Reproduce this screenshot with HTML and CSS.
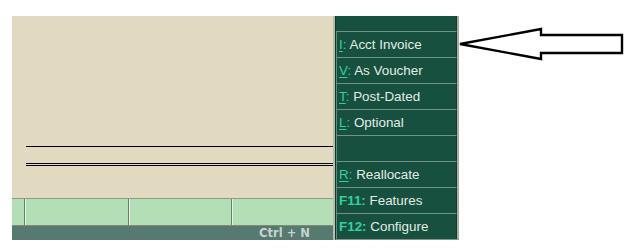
FILE: index.html
```html
<!DOCTYPE html>
<html>
<head>
<meta charset="utf-8">
<link rel="stylesheet" href="styles.css">
</head>
<body>
<div class="screen">
  <div class="main">
    <div class="canvas">
      <div class="rule"></div>
      <div class="double"></div>
    </div>
    <div class="tabs">
      <div class="cell first"></div>
      <div class="cell"></div>
      <div class="cell"></div>
      <div class="cell"></div>
    </div>
    <div class="status">
      <span class="hint">Ctrl + N</span>
    </div>
  </div>
  <div class="gap"></div>
  <div class="side">
    <div class="side-top"></div>
    <div class="btn"><span class="key"><u>I</u>:</span> Acct Invoice</div>
    <div class="btn"><span class="key"><u>V</u>:</span> As Voucher</div>
    <div class="btn"><span class="key"><u>T</u>:</span> Post-Dated</div>
    <div class="btn"><span class="key"><u>L</u>:</span> Optional</div>
    <div class="btn"></div>
    <div class="btn"><span class="key"><u>R</u>:</span> Reallocate</div>
    <div class="btn"><span class="key bold">F11:</span> Features</div>
    <div class="btn"><span class="key bold">F12:</span> Configure</div>
  </div>
</div>
<svg class="arrow" width="631" height="252" viewBox="0 0 631 252">
  <polygon points="460,44 541,29 541,35 622,35 622,53 541,53 541,59" fill="#ffffff" stroke="#000000" stroke-width="2.4" stroke-linejoin="miter"/>
</svg>
</body>
</html>
```

FILE: styles.css
```css
html, body {
  margin: 0;
  padding: 0;
  background: #ffffff;
  width: 631px;
  height: 252px;
  overflow: hidden;
  position: relative;
  font-family: "Liberation Sans", Arial, sans-serif;
}

.screen {
  display: flex;
  margin: 16px 0 0 12px;
  height: 224px;
  width: 447px;
}

.main {
  width: 321px;
  display: flex;
  flex-direction: column;
}

.canvas {
  flex: 1;
  background: #e2dac0;
  padding-left: 14px;
}

.rule {
  margin-top: 130px;
  height: 1px;
  background: #000000;
}

.double {
  margin-top: 16px;
  height: 1px;
  border-top: 1px solid #000000;
  border-bottom: 1px solid #000000;
}

.tabs {
  height: 28px;
  box-sizing: border-box;
  display: grid;
  grid-template-columns: 12px 104px 103px 102px;
  background: #b4deb6;
  border-top: 1px solid #8e9c86;
  border-bottom: 1px solid #7c8c78;
}

.cell {
  border-left: 1px solid #6e7e68;
  box-shadow: inset 1px 0 0 #e4f4e2;
}

.cell.first {
  border-left: none;
  box-shadow: none;
}

.status {
  height: 14px;
  background: #567a70;
  display: grid;
  grid-template-columns: 219px 102px;
}

.hint {
  grid-column: 2;
  text-align: center;
  font-family: "DejaVu Sans", sans-serif;
  font-weight: bold;
  font-size: 11.5px;
  line-height: 14px;
  color: #c9d3cf;
  padding-left: 5px;
}

.gap {
  width: 2px;
  background: #b9bcaa;
}

.side {
  width: 124px;
  box-sizing: border-box;
  background: #17503f;
  border-left: 1px solid #0b3a2c;
  border-right: 2px solid #a9ada2;
  border-bottom: 1px solid #7d958a;
  display: flex;
  flex-direction: column;
}

.side-top {
  height: 15px;
  border-right: 1px solid #0e3e31;
}

.btn {
  height: 26px;
  box-sizing: border-box;
  border-top: 1px solid #6f958a;
  border-left: 1px solid #5f8a7c;
  border-right: 1px solid #0e3e31;
  padding-left: 2px;
  padding-top: 1px;
  font-size: 13.4px;
  line-height: 24px;
  color: #e2ece4;
  white-space: nowrap;
}

.key {
  color: #33cf9f;
}

.key u {
  text-decoration-color: #33cf9f;
  text-underline-offset: 2px;
}

.key.bold {
  font-weight: bold;
}

.arrow {
  position: absolute;
  left: 0;
  top: 0;
}
```
